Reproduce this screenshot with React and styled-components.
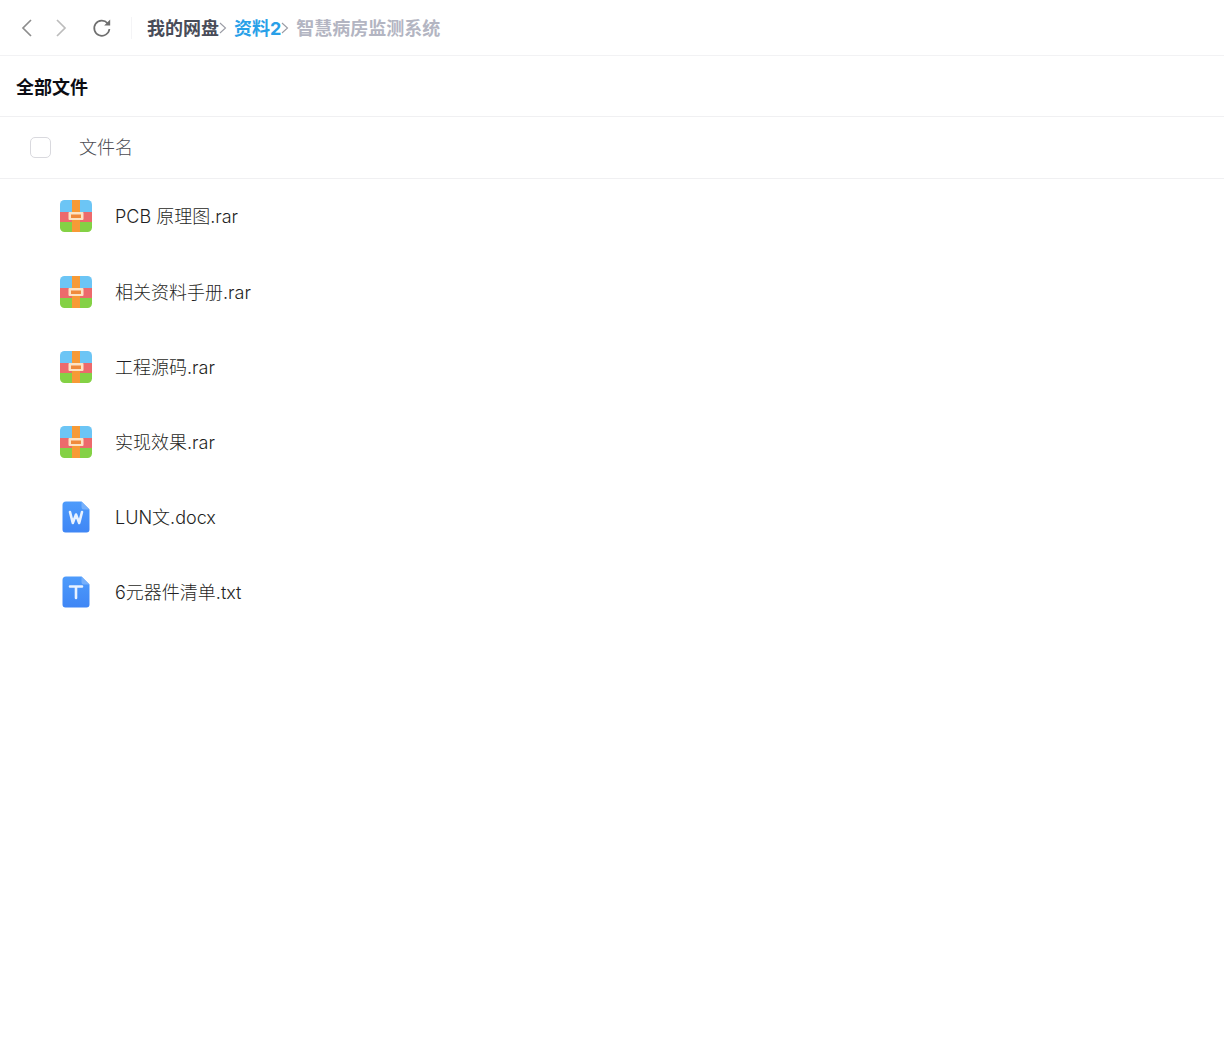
import React from 'react';
import styled, { createGlobalStyle } from 'styled-components';

const GlobalStyle = createGlobalStyle`
    html, body {
        margin: 0;
        padding: 0;
        background: #fff;
        font-family: Inter, "Noto Sans CJK SC", sans-serif;
    }
`

const files = [
    { name: 'PCB 原理图.rar', type: 'rar' },
    { name: '相关资料手册.rar', type: 'rar' },
    { name: '工程源码.rar', type: 'rar' },
    { name: '实现效果.rar', type: 'rar' },
    { name: 'LUN文.docx', type: 'word' },
    { name: '6元器件清单.txt', type: 'text' },
]

const ArchiveIcon = () => (
    <svg width="32" height="32" viewBox="0 0 32 32">
        <defs>
            <clipPath id="archive-clip">
                <rect width="32" height="32" rx="4.5" />
            </clipPath>
        </defs>
        <g clipPath="url(#archive-clip)">
            <rect width="32" height="12" fill="#6cc5f5" />
            <rect y="12" width="32" height="10" fill="#ec6a6c" />
            <rect y="22" width="32" height="10" fill="#84d145" />
            <rect x="12" width="8" height="32" fill="#f79a36" />
        </g>
        <rect x="8.5" y="12" width="15" height="8" rx="1" fill="#fde3c4" />
        <rect x="11" y="14.5" width="10" height="3.5" fill="#f08a3c" />
    </svg>
)

const DocIcon = ({ type }) => (
    <svg width="32" height="32" viewBox="0 0 32 32">
        <defs>
            <linearGradient id={`doc-${type}`} x1="0" y1="0" x2="0" y2="1">
                <stop offset="0" stopColor="#4d9bfb" />
                <stop offset="1" stopColor="#3f86f5" />
            </linearGradient>
        </defs>
        <path
            d="M6 0.5H21.5L29.5 8.5V28.5a3 3 0 0 1-3 3H5.5a3 3 0 0 1-3-3V4a3.5 3.5 0 0 1 3.5-3.5Z"
            fill={`url(#doc-${type})`}
        />
        <path d="M21.5 0.5L29.5 8.5H24a2.5 2.5 0 0 1-2.5-2.5Z" fill="#76b0fb" />
        {type === 'word' ? (
            <path d="M10 11L12.8 22L16 13.5L19.2 22L22 11" fill="none" stroke="#e8f2ff" strokeWidth="2.6" strokeLinejoin="round" strokeLinecap="round" />
        ) : (
            <path d="M10 10.5H22M16 10.5V22" fill="none" stroke="#e8f2ff" strokeWidth="2.6" strokeLinecap="round" />
        )}
    </svg>
)

const CrumbArrow = () => (
    <ArrowBox>
        <svg width="8" height="14" viewBox="0 0 8 14" fill="none" stroke="#9a9ca5" strokeWidth="1.1">
            <path d="M1 2L6.5 7L1 12" />
        </svg>
    </ArrowBox>
)

const App = () => {
    return (
        <Wrapper>
            <GlobalStyle />
            <TopBar>
                <NavButton>
                    <svg width="14" height="20" viewBox="0 0 14 20" fill="none" stroke="#8d8d8d" strokeWidth="1.7">
                        <path d="M11 2L3 10L11 18" />
                    </svg>
                </NavButton>
                <NavButton>
                    <svg width="14" height="20" viewBox="0 0 14 20" fill="none" stroke="#bcbcbc" strokeWidth="1.7">
                        <path d="M3 2L11 10L3 18" />
                    </svg>
                </NavButton>
                <RefreshButton>
                    <svg width="20" height="20" viewBox="0 0 20 20" fill="none">
                        <path d="M15.6 5.2A7.6 7.6 0 1 0 17.4 11" stroke="#6f6f6f" strokeWidth="1.7" />
                        <path d="M18.2 1.6V7.6H12.2Z" fill="#6f6f6f" />
                    </svg>
                </RefreshButton>
                <Divider />
                <Crumbs>
                    <Crumb $color="#484c58">我的网盘</Crumb>
                    <CrumbArrow />
                    <Crumb $color="#28a0e8">资料2</Crumb>
                    <CrumbArrow />
                    <Crumb $color="#b3b5c2">智慧病房监测系统</Crumb>
                </Crumbs>
            </TopBar>
            <TitleBar>全部文件</TitleBar>
            <ListHeader>
                <CheckBox />
                <HeaderLabel>文件名</HeaderLabel>
            </ListHeader>
            <FileList>
                {files.map(file => (
                    <FileRow key={file.name}>
                        <IconBox>
                            {file.type === 'rar' ? <ArchiveIcon /> : <DocIcon type={file.type} />}
                        </IconBox>
                        <FileName>{file.name}</FileName>
                    </FileRow>
                ))}
            </FileList>
        </Wrapper>
    );
};

export default App;

const Wrapper = styled.div`
    width: 1224px;
    height: 1056px;
    background: #fff;
    overflow: hidden;
`

const TopBar = styled.div`
    height: 56px;
    box-sizing: border-box;
    display: flex;
    align-items: center;
    padding-left: 20px;
    border-bottom: 1px solid #f2f2f4;
`

const NavButton = styled.div`
    width: 14px;
    height: 20px;
    margin-right: 20px;
    display: flex;
`

const RefreshButton = styled.div`
    width: 20px;
    height: 20px;
    margin-left: 4px;
    display: flex;
`

const Divider = styled.div`
    width: 1px;
    height: 22px;
    margin: 0 15px 0 19px;
    background: #f4f4f6;
`

const Crumbs = styled.div`
    display: flex;
    align-items: center;
`

const Crumb = styled.span`
    margin-top: 2px;
    font-size: 18px;
    font-weight: 700;
    line-height: 24px;
    color: ${props => props.$color};
`

const ArrowBox = styled.span`
    display: flex;
    width: 15px;
    height: 14px;
`

const TitleBar = styled.div`
    height: 61px;
    box-sizing: border-box;
    padding: 0 16px;
    display: flex;
    align-items: center;
    font-size: 18px;
    font-weight: 700;
    color: #0c0c12;
    border-bottom: 1px solid #f0f0f2;
`

const ListHeader = styled.div`
    height: 62px;
    box-sizing: border-box;
    padding-left: 30px;
    display: flex;
    align-items: center;
    border-bottom: 1px solid #f0f0f2;
`

const CheckBox = styled.div`
    width: 21px;
    height: 21px;
    box-sizing: border-box;
    border: 1px solid #d9d9de;
    border-radius: 5px;
    background: #fff;
`

const HeaderLabel = styled.span`
    margin-left: 28px;
    font-size: 18px;
    font-weight: 300;
    line-height: 24px;
    color: #4c4c53;
`

const FileList = styled.div`
    display: flex;
    flex-direction: column;
`

const FileRow = styled.div`
    height: 75px;
    box-sizing: border-box;
    padding-left: 60px;
    display: flex;
    align-items: center;
    &:first-child {
        padding-bottom: 2px;
    }
`

const IconBox = styled.div`
    width: 32px;
    height: 32px;
    display: flex;
`

const FileName = styled.span`
    margin-left: 23px;
    margin-top: 2px;
    font-size: 18px;
    font-weight: 300;
    line-height: 24px;
    color: #1f1f24;
`
